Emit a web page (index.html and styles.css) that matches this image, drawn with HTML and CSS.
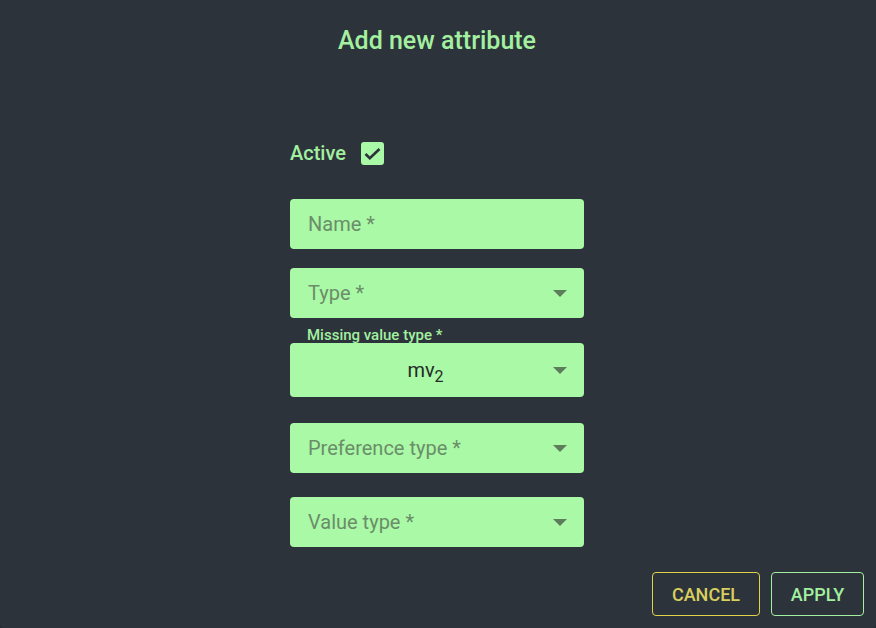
FILE: index.html
```html
<!DOCTYPE html>
<html lang="en">
<head>
<meta charset="utf-8">
<title>Add new attribute</title>
<link rel="stylesheet" href="styles.css">
</head>
<body>
<div class="dialog">
  <h1 class="title">Add new attribute</h1>
  <div class="form">
    <label class="active-row">
      <span class="active-label">Active</span>
      <span class="checkbox">
        <svg width="23" height="23" viewBox="0 0 23 23"><path d="M4.5 12 L8.8 16.2 L18.5 7" fill="none" stroke="#2c333a" stroke-width="2.6" stroke-linecap="butt" stroke-linejoin="miter"/></svg>
      </span>
    </label>
    <div class="field f-name"><span class="placeholder">Name *</span></div>
    <div class="field select f-type"><span class="placeholder">Type *</span><span class="arrow"></span></div>
    <div class="float-label">Missing value type *</div>
    <div class="field select tall"><span class="value">mv<sub>2</sub></span><span class="arrow"></span></div>
    <div class="field select f-pref"><span class="placeholder">Preference type *</span><span class="arrow"></span></div>
    <div class="field select f-val"><span class="placeholder">Value type *</span><span class="arrow"></span></div>
  </div>
  <div class="actions">
    <button class="btn cancel">Cancel</button>
    <button class="btn apply">Apply</button>
  </div>
</div>
</body>
</html>
```
FILE: styles.css
```css
html, body {
  margin: 0;
  padding: 0;
  background: #252b30;
}
.dialog {
  width: 876px;
  height: 628px;
  box-sizing: border-box;
  background: #2c333a;
  border-radius: 0 0 4px 4px;
  font-family: Roboto, "Liberation Sans", sans-serif;
  display: flex;
  flex-direction: column;
  align-items: center;
}
.title {
  margin: 27px 0 0;
  padding-right: 2px;
  font-size: 25px;
  line-height: 28px;
  font-weight: 500;
  color: #a3f0a0;
}
.form {
  width: 294px;
  margin-top: 86px;
  margin-right: 2px;
  display: flex;
  flex-direction: column;
}
.active-row {
  display: flex;
  align-items: center;
  height: 24px;
}
.active-label {
  font-size: 20px;
  font-weight: 500;
  color: #a3f0a0;
}
.checkbox {
  margin-left: 15px;
  width: 23px;
  height: 23px;
  border-radius: 3px;
  background: #a9f9a6;
  display: flex;
}
.field {
  height: 50px;
  box-sizing: border-box;
  background: #a9f9a6;
  border-radius: 4px;
  padding: 0 17px 0 18px;
  display: flex;
  align-items: center;
  font-size: 20px;
}
.f-name { margin-top: 34px; }
.f-type { margin-top: 19px; }
.f-pref { margin-top: 26px; }
.f-val { margin-top: 24px; }
.placeholder {
  flex: 1;
  color: #6b8d69;
}
.float-label {
  margin-top: 9px;
  padding-left: 17px;
  font-size: 15px;
  line-height: 16px;
  font-weight: 500;
  color: #a3f0a0;
}
.tall {
  height: 54px;
}
.value {
  flex: 1;
  text-align: center;
  padding-right: 10px;
  color: #262b2a;
  font-size: 20px;
}
.value sub {
  font-size: 16px;
  line-height: 0;
  vertical-align: -5px;
}
.arrow {
  width: 0;
  height: 0;
  border-left: 7px solid transparent;
  border-right: 7px solid transparent;
  border-top: 7px solid #5d7d5b;
}
.actions {
  margin-top: auto;
  margin-bottom: 12px;
  align-self: flex-end;
  margin-right: 12px;
  display: flex;
  gap: 11px;
}
.btn {
  height: 44px;
  box-sizing: border-box;
  background: transparent;
  border-radius: 4px;
  font-family: Roboto, "Liberation Sans", sans-serif;
  font-size: 18px;
  font-weight: 500;
  text-transform: uppercase;
  padding: 0;
}
.cancel {
  width: 108px;
  border: 1px solid #e2d24a;
  color: #d9cf5e;
}
.apply {
  width: 93px;
  border: 1px solid #a3f0a0;
  color: #a3f0a0;
}
```
